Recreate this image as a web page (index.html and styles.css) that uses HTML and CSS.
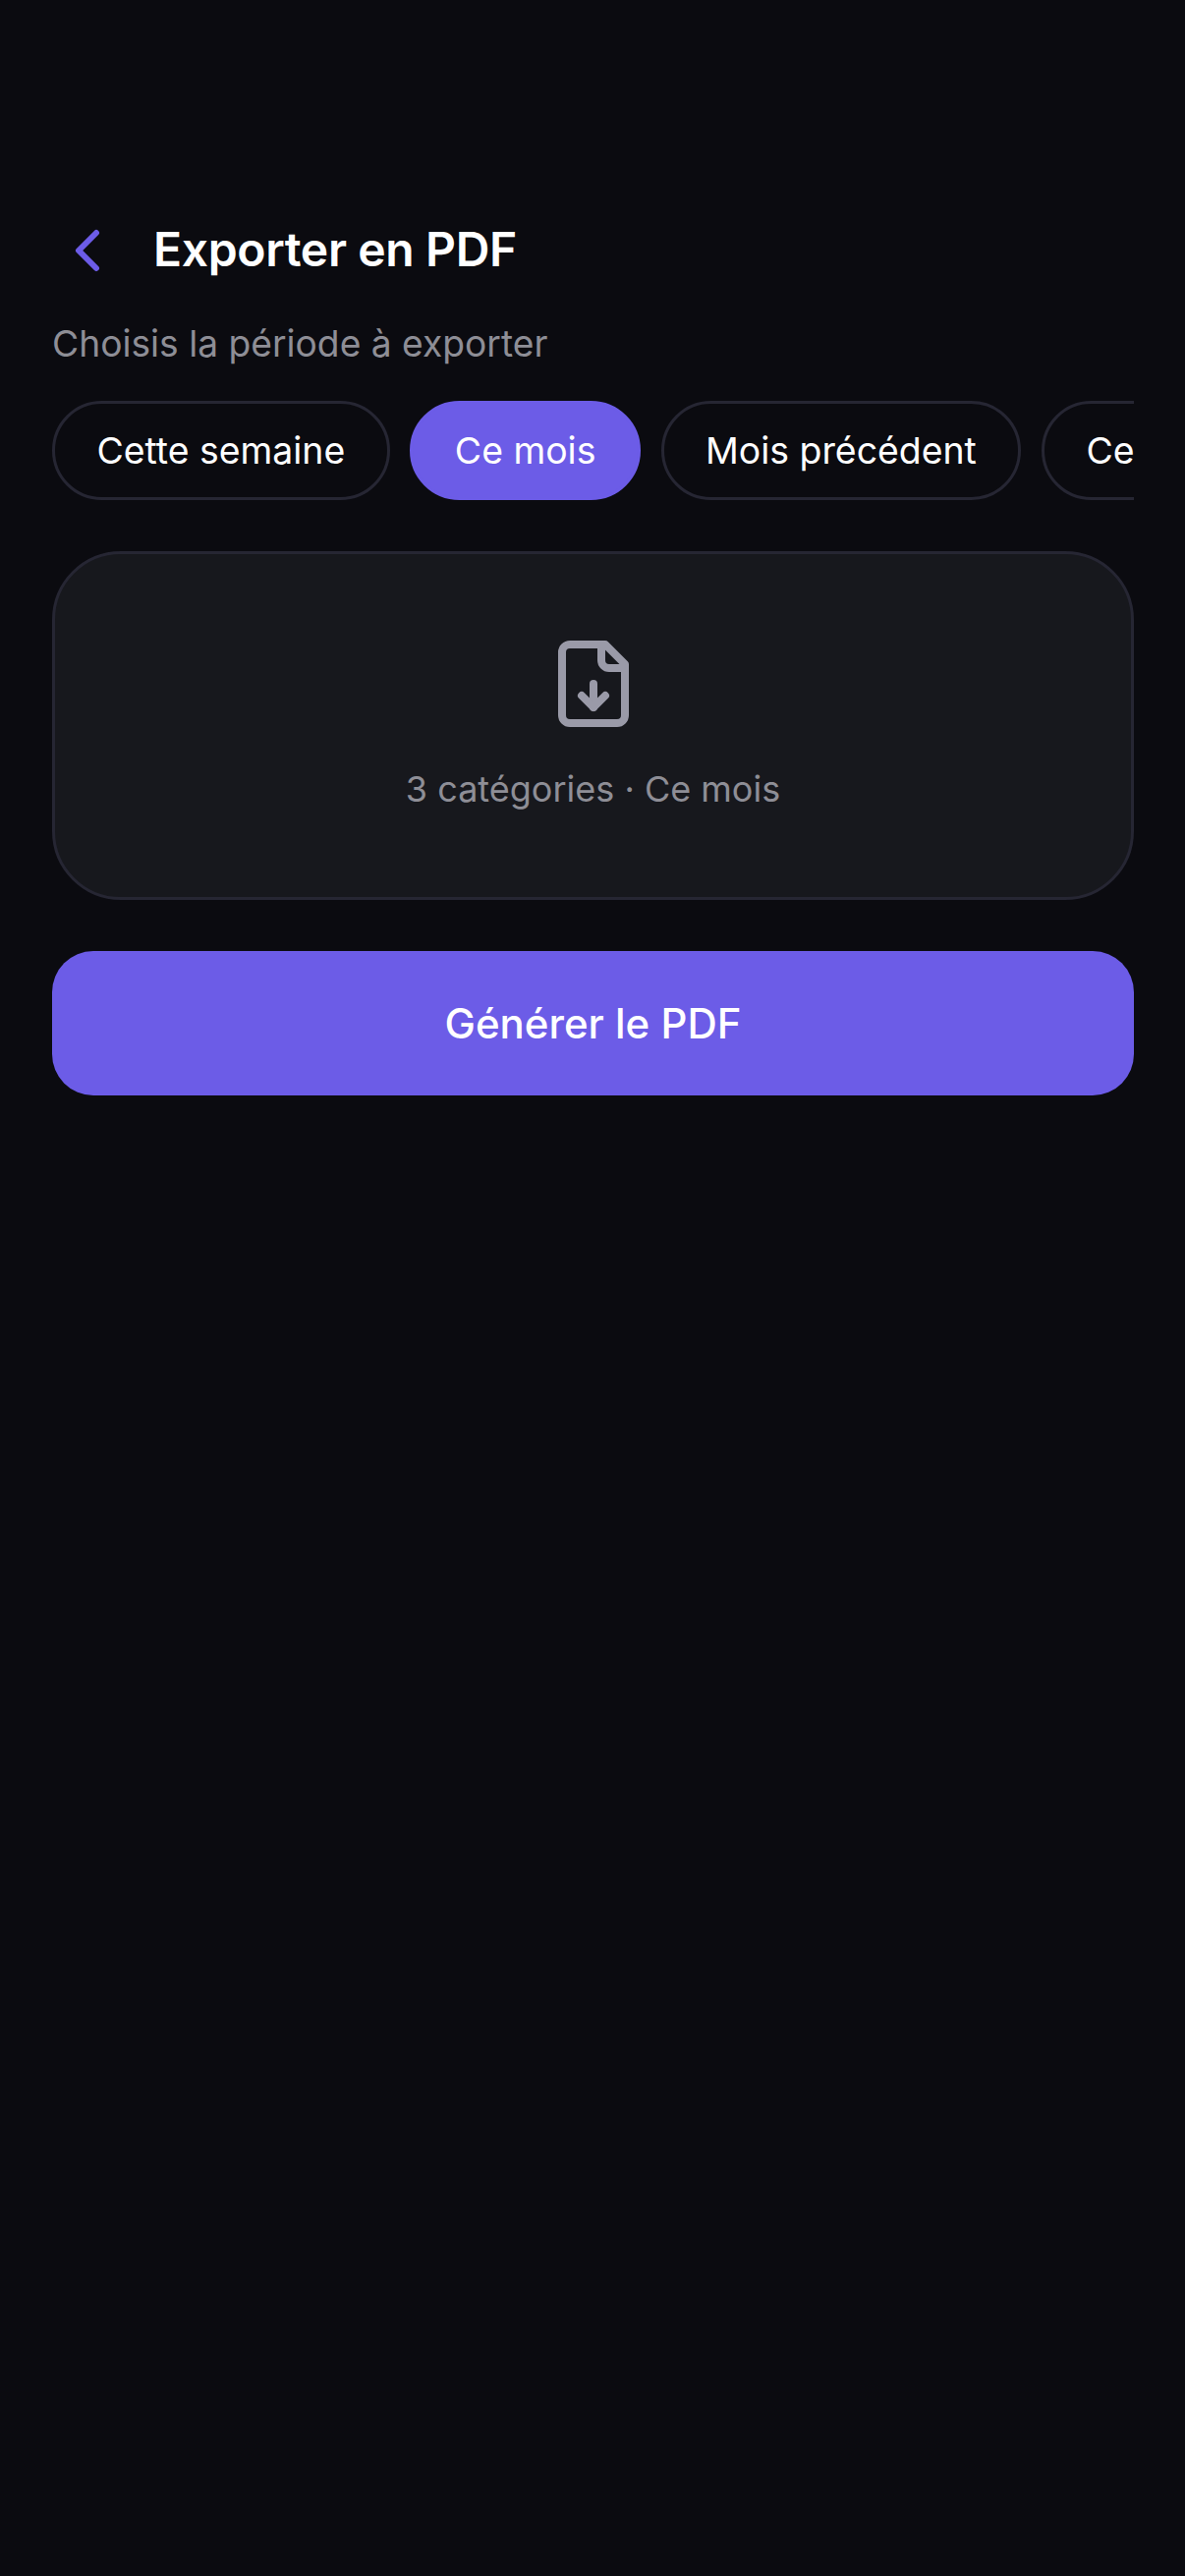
FILE: index.html
```html
<!DOCTYPE html>
<html lang="fr">
<head>
    <meta charset="UTF-8">
    <meta name="viewport" content="width=device-width, initial-scale=1.0">
    <title>Exporter en PDF</title>
    <link rel="stylesheet" href="styles.css">
</head>
<body>
    <div class="container">
        <!-- En-tête -->
        <div class="header">
            <svg class="back-icon" viewBox="0 0 24 24" fill="none" stroke="currentColor" stroke-width="2" stroke-linecap="round" stroke-linejoin="round">
                <path d="m15 18-6-6 6-6"/>
            </svg>
            <h1>Exporter en PDF</h1>
        </div>

        <p class="subtitle">Choisis la période à exporter</p>

        <!-- Choix de la période -->
        <div class="chips">
            <button class="chip">Cette semaine</button>
            <button class="chip active">Ce mois</button>
            <button class="chip">Mois précédent</button>
            <button class="chip">Cette année</button>
        </div>

        <!-- Résumé -->
        <div class="summary">
            <svg class="file-icon" viewBox="0 0 24 24" fill="none" stroke="currentColor" stroke-width="2" stroke-linecap="round" stroke-linejoin="round">
                <path d="M15 2H6a2 2 0 0 0-2 2v16a2 2 0 0 0 2 2h12a2 2 0 0 0 2-2V7Z"/>
                <path d="M14 2v4a2 2 0 0 0 2 2h4"/>
                <path d="M12 18v-6"/>
                <path d="m9 15 3 3 3-3"/>
            </svg>
            <p>3 catégories · Ce mois</p>
        </div>

        <button class="generate">Générer le PDF</button>
    </div>
</body>
</html>
```

FILE: styles.css
```css
html, body {
    height: 100%;
}

body {
    font-family: Inter, "Liberation Sans", sans-serif;
    background-color: #0b0b10;
    color: #fff;
    margin: 0;
}

.container {
    padding: 219px 52px 0 53px;
}

.header {
    display: flex;
    align-items: center;
    gap: 31px;
    height: 72px;
}

.back-icon {
    width: 72px;
    height: 72px;
    color: #6c5ce7;
    flex-shrink: 0;
}

h1 {
    font-size: 48px;
    font-weight: 600;
    letter-spacing: -0.35px;
    margin: -3px 0 0;
}

.subtitle {
    font-size: 37.2px;
    line-height: 48px;
    color: #8e8e96;
    margin: 35px 0 0;
}

.chips {
    display: flex;
    gap: 20.8px;
    margin-top: 34px;
    overflow: hidden;
}

.chip {
    flex-shrink: 0;
    height: 101px;
    padding: 0 42.4px;
    font-family: inherit;
    font-size: 37.4px;
    color: #fff;
    background: transparent;
    border: 3px solid #262633;
    border-radius: 51px;
}

.chip.active {
    background: #6c5ce7;
    border-color: #6c5ce7;
}

.summary {
    display: flex;
    flex-direction: column;
    align-items: center;
    box-sizing: border-box;
    height: 355px;
    margin-top: 52px;
    padding-top: 84px;
    background: #17181d;
    border: 3px solid #262633;
    border-radius: 70px;
}

.file-icon {
    width: 96px;
    height: 96px;
    color: #9a9aa8;
}

.summary p {
    font-size: 36px;
    line-height: 48px;
    color: #8e8e96;
    margin: 35px 0 0;
}

.generate {
    display: block;
    width: 100%;
    height: 147px;
    margin-top: 52px;
    font-family: inherit;
    font-size: 42px;
    font-weight: 500;
    color: #fff;
    background: #6c5ce7;
    border: none;
    border-radius: 42px;
}
```
